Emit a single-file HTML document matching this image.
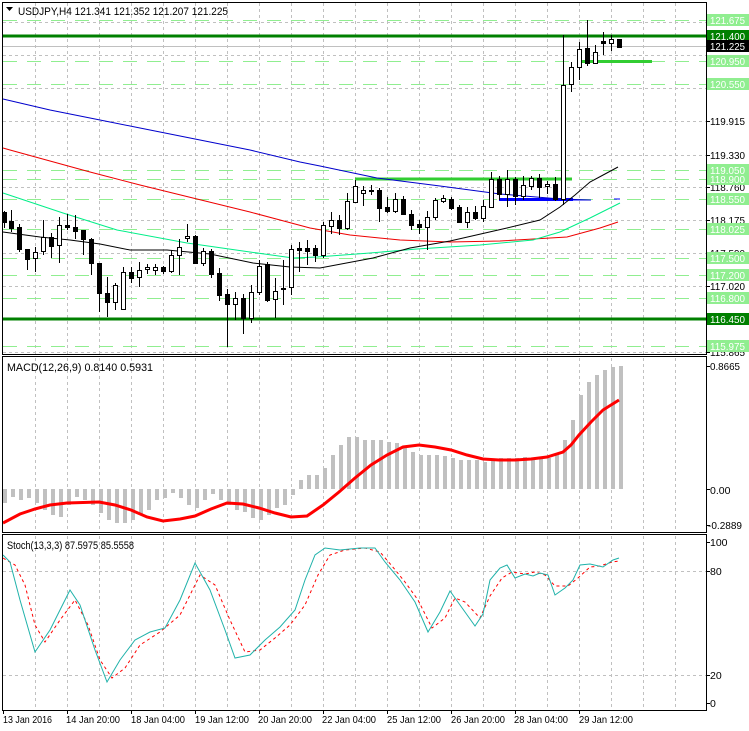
<!DOCTYPE html>
<html><head><meta charset="utf-8"><style>
html,body{margin:0;padding:0;background:#fff;width:749px;height:731px;overflow:hidden}
svg{display:block;font-family:"Liberation Sans",sans-serif;font-size:11px}
</style></head><body>
<svg width="749" height="731" viewBox="0 0 749 731" xmlns="http://www.w3.org/2000/svg">
<rect width="749" height="731" fill="#fff"/>
<g stroke="#c0c0c0" stroke-dasharray="3,3" shape-rendering="crispEdges">
<path d="M35.5 3V354M67.5 3V354M99.5 3V354M131.5 3V354M163.5 3V354M195.5 3V354M227.5 3V354M259.5 3V354M291.5 3V354M323.5 3V354M355.5 3V354M387.5 3V354M419.5 3V354M451.5 3V354M483.5 3V354M515.5 3V354M547.5 3V354M579.5 3V354M611.5 3V354M643.5 3V354M675.5 3V354"/>
<path d="M35.5 358V532M67.5 358V532M99.5 358V532M131.5 358V532M163.5 358V532M195.5 358V532M227.5 358V532M259.5 358V532M291.5 358V532M323.5 358V532M355.5 358V532M387.5 358V532M419.5 358V532M451.5 358V532M483.5 358V532M515.5 358V532M547.5 358V532M579.5 358V532M611.5 358V532M643.5 358V532M675.5 358V532"/>
<path d="M35.5 536V709M67.5 536V709M99.5 536V709M131.5 536V709M163.5 536V709M195.5 536V709M227.5 536V709M259.5 536V709M291.5 536V709M323.5 536V709M355.5 536V709M387.5 536V709M419.5 536V709M451.5 536V709M483.5 536V709M515.5 536V709M547.5 536V709M579.5 536V709M611.5 536V709M643.5 536V709M675.5 536V709"/>
<path d="M3 22.5H706M3 55.5H706M3 88.5H706M3 121.5H706M3 155.5H706M3 187.5H706M3 220.5H706M3 253.5H706M3 286.5H706M3 352.5H706"/>
<path d="M3 571.5H706M3 675.5H706"/>
</g>
<g stroke="#90ee90" stroke-dasharray="14,10" shape-rendering="crispEdges">
<path d="M3 20.5H706M3 61.5H706M3 84.5H706M3 170.5H706M3 179.5H706M3 199.5H706M3 229.5H706M3 258.5H706M3 275.5H706M3 298.5H706M3 346.5H706"/>
</g>
<path d="M3 46.5H706" stroke="#c0c0c0" shape-rendering="crispEdges"/>
<path d="M3 36H706M3 319H706" stroke="#008000" stroke-width="3" shape-rendering="crispEdges"/>
<path d="M355 179H572M582 61.5H652" stroke="#32cd32" stroke-width="3" shape-rendering="crispEdges"/>
<path d="M499 199.5H573" stroke="#0000ff" stroke-width="3" shape-rendering="crispEdges"/>
<path d="M573 200H591M614 199H620" stroke="#0000ff" stroke-width="1"/>
<polyline fill="none" stroke="#0000cc" stroke-width="1" points="3,99 50,110 100,120 150,130 200,140 250,150 300,162 320,166 377,178 440,186 500,194 560,199 590,200"/>
<polyline fill="none" stroke="#ee0000" stroke-width="1" points="3,148 10,150 50,161 90,172 140,185 197,199 250,212 310,228 350,235 400,240 450,242 500,241 567,237 600,228 618,222"/>
<polyline fill="none" stroke="#00ee88" stroke-width="1" points="3,193 30,202 63,213 117,230 187,243 250,252 293,258 317,257 370,253 417,249 480,245 533,240 560,232 590,218 620,203"/>
<polyline fill="none" stroke="#000" stroke-width="1" points="3,232 40,237 70,240 100,244 130,250 167,250 210,254 253,263 290,267 320,268 373,258 410,248 450,241 507,228 540,220 560,207 575,195 590,182 605,174 618,167"/>
<g stroke="#000" shape-rendering="crispEdges">
<path d="M4.5 211V228M11.5 210V232M19.5 224V252M27.5 249V270M35.5 247V272M43.5 220V255M51.5 233V258M59.5 217V263M67.5 214V230M75.5 215V239M83.5 230V255M91.5 238V275M99.5 263V312M107.5 277V317M115.5 283V310M123.5 267V310M131.5 267V283M139.5 262V287M147.5 264V274M155.5 264V275M163.5 266V274M171.5 250V273M179.5 239V275M187.5 224V242M195.5 235V263M203.5 248V266M211.5 249V278M219.5 268V301M227.5 289V347M235.5 292V320M243.5 294V334M251.5 285V323M259.5 260V295M267.5 262V302M275.5 278V318M283.5 260V305M291.5 245V295M299.5 242V272M307.5 240V265M315.5 245V262M323.5 222V258M331.5 212V234M339.5 215V235M347.5 193V230M355.5 180V203M363.5 186V206M371.5 185V195M379.5 188V222M387.5 197V213M395.5 193V213M403.5 196V215M411.5 210V230M419.5 220V234M427.5 211V250M435.5 198V220M443.5 195V203M451.5 197V210M459.5 205V223M467.5 207V228M475.5 206V220M483.5 200V222M491.5 172V208M499.5 176V200M507.5 170V207M515.5 177V205M523.5 176V200M531.5 176V190M539.5 174V198M547.5 181V194M555.5 177V201M563.5 35V205M571.5 62V92M579.5 42V80M587.5 20V66M595.5 45V64M603.5 32V55M611.5 35V51M619.5 39V48"/>
<g fill="#000">
<rect x="2.5" y="212.5" width="4" height="10"/><rect x="9.5" y="221.5" width="4" height="7"/><rect x="17.5" y="227.5" width="4" height="22"/><rect x="25.5" y="249.5" width="4" height="10"/><rect x="49.5" y="237.5" width="4" height="9"/><rect x="65.5" y="225.5" width="4" height="2"/><rect x="73.5" y="227.5" width="4" height="4"/><rect x="81.5" y="230.5" width="4" height="9"/><rect x="89.5" y="239.5" width="4" height="24"/><rect x="97.5" y="263.5" width="4" height="30"/><rect x="105.5" y="293.5" width="4" height="9"/><rect x="129.5" y="272.5" width="4" height="6"/><rect x="161.5" y="267.5" width="4" height="4"/><rect x="193.5" y="236.5" width="4" height="27"/><rect x="209.5" y="251.5" width="4" height="23"/><rect x="217.5" y="273.5" width="4" height="22"/><rect x="225.5" y="294.5" width="4" height="10"/><rect x="241.5" y="298.5" width="4" height="20"/><rect x="265.5" y="264.5" width="4" height="36"/><rect x="297.5" y="248.5" width="4" height="2"/><rect x="305.5" y="248.5" width="4" height="3"/><rect x="313.5" y="248.5" width="4" height="7"/><rect x="337.5" y="220.5" width="4" height="8"/><rect x="377.5" y="190.5" width="4" height="18"/><rect x="385.5" y="207.5" width="4" height="4"/><rect x="401.5" y="199.5" width="4" height="15"/><rect x="409.5" y="214.5" width="4" height="11"/><rect x="417.5" y="224.5" width="4" height="3"/><rect x="449.5" y="199.5" width="4" height="9"/><rect x="457.5" y="207.5" width="4" height="15"/><rect x="473.5" y="212.5" width="4" height="6"/><rect x="497.5" y="179.5" width="4" height="15"/><rect x="513.5" y="179.5" width="4" height="17"/><rect x="537.5" y="178.5" width="4" height="9"/><rect x="553.5" y="184.5" width="4" height="15"/><rect x="585.5" y="48.5" width="4" height="15"/><rect x="601.5" y="41.5" width="4" height="2"/><rect x="617.5" y="39.5" width="4" height="8"/>
</g>
<g fill="#fff">
<rect x="33.5" y="252.5" width="4" height="6"/><rect x="41.5" y="237.5" width="4" height="14"/><rect x="57.5" y="225.5" width="4" height="20"/><rect x="113.5" y="285.5" width="4" height="17"/><rect x="121.5" y="272.5" width="4" height="37"/><rect x="137.5" y="270.5" width="4" height="7"/><rect x="145.5" y="267.5" width="4" height="2"/><rect x="153.5" y="267.5" width="4" height="3"/><rect x="169.5" y="255.5" width="4" height="16"/><rect x="177.5" y="247.5" width="4" height="8"/><rect x="185.5" y="236.5" width="4" height="2"/><rect x="201.5" y="251.5" width="4" height="12"/><rect x="233.5" y="298.5" width="4" height="6"/><rect x="249.5" y="292.5" width="4" height="26"/><rect x="257.5" y="266.5" width="4" height="26"/><rect x="273.5" y="291.5" width="4" height="8"/><rect x="281.5" y="288.5" width="4" height="1"/><rect x="289.5" y="249.5" width="4" height="38"/><rect x="321.5" y="225.5" width="4" height="30"/><rect x="329.5" y="220.5" width="4" height="6"/><rect x="345.5" y="201.5" width="4" height="27"/><rect x="353.5" y="186.5" width="4" height="16"/><rect x="361.5" y="190.5" width="4" height="3"/><rect x="369.5" y="190.5" width="4" height="1"/><rect x="393.5" y="199.5" width="4" height="12"/><rect x="425.5" y="217.5" width="4" height="10"/><rect x="433.5" y="200.5" width="4" height="17"/><rect x="441.5" y="198.5" width="4" height="3"/><rect x="465.5" y="212.5" width="4" height="10"/><rect x="481.5" y="206.5" width="4" height="12"/><rect x="489.5" y="179.5" width="4" height="28"/><rect x="505.5" y="179.5" width="4" height="15"/><rect x="521.5" y="185.5" width="4" height="11"/><rect x="529.5" y="178.5" width="4" height="8"/><rect x="545.5" y="184.5" width="4" height="2"/><rect x="561.5" y="85.5" width="4" height="114"/><rect x="569.5" y="67.5" width="4" height="17"/><rect x="577.5" y="49.5" width="4" height="18"/><rect x="593.5" y="52.5" width="4" height="11"/><rect x="609.5" y="39.5" width="4" height="4"/>
</g>
</g>
<g stroke="#c0c0c0" stroke-width="4" shape-rendering="crispEdges">
<path d="M5 489V503M13 489V497M21 489V500M29 489V498M37 489V503M45 489V510M53 489V515M61 489V517M69 489V505M77 489V497M85 489V500M93 489V505M101 489V513M109 489V520M117 489V523M125 489V523M133 489V520M141 489V515M149 489V510M157 489V500M165 489V498M173 489V493M181 489V498M189 489V505M197 489V508M205 489V500M213 489V494M221 489V500M229 489V505M237 489V510M245 489V512M253 489V518M261 489V520M269 489V515M277 489V508M285 489V505M293 489V495M301 489V480M309 489V475M317 489V475M325 489V468M333 489V455M341 489V445M349 489V437M357 489V437M365 489V440M373 489V440M381 489V440M389 489V442M397 489V443M405 489V447M413 489V452M421 489V455M429 489V455M437 489V455M445 489V456M453 489V458M461 489V460M469 489V460M477 489V460M485 489V462M493 489V460M501 489V458M509 489V458M517 489V458M525 489V457M533 489V458M541 489V458M549 489V458M557 489V455M565 489V440M573 489V420M581 489V395M589 489V382M597 489V375M605 489V370M613 489V367M621 489V366"/>
</g>
<polyline fill="none" stroke="#ff0000" stroke-width="3" points="3,523 20,514 35,509 50,505 67,503 99,502 115,505 131,510 147,517 163,521 180,519 195,516 211,509 227,503 243,504 259,508 275,513 291,517 307,516 323,505 339,492 355,478 371,465 387,455 403,447 419,445 435,447 451,450 467,455 483,459 499,460 515,460 531,459 547,457 563,452 571,445 579,435 591,422 603,410 619,400"/>
<polyline fill="none" stroke="#ff0000" stroke-width="1" stroke-dasharray="3,3" points="3,558 15,565 25,585 35,625 45,642 60,620 75,600 88,625 100,660 112,678 125,668 140,645 160,632 180,615 200,575 215,585 230,620 245,652 260,650 275,638 290,625 305,605 318,575 330,555 345,550 365,548 380,552 392,566 405,582 418,600 432,628 445,618 455,598 465,602 480,618 490,596 502,578 512,572 525,574 535,572 545,575 555,586 568,586 578,578 590,567 600,566 612,562 620,561"/>
<polyline fill="none" stroke="#20b2aa" stroke-width="1" points="3,555 10,562 20,600 35,652 50,630 70,590 80,605 95,650 107,682 120,660 135,640 150,632 165,628 180,600 195,563 210,590 225,630 235,658 250,655 265,640 280,627 295,610 305,580 315,555 325,548 340,550 360,548 375,548 385,562 400,580 415,602 428,632 440,612 450,591 465,612 475,626 483,614 490,580 500,568 507,565 515,578 525,574 533,576 540,573 548,575 555,595 565,588 573,580 580,565 590,564 603,567 613,560 619,558"/>
<g fill="none" stroke="#000" shape-rendering="crispEdges">
<rect x="2.5" y="2.5" width="704" height="352"/>
<rect x="2.5" y="356.5" width="704" height="176"/>
<rect x="2.5" y="534.5" width="704" height="176"/>
<path d="M706 20.5h4M706 121.5h4M706 155.5h4M706 187.5h4M706 220.5h4M706 253.5h4M706 286.5h4M706 352.5h4M706 366.5h4M706 489.5h4M706 525.5h4M706 542.5h4M706 571.5h4M706 675.5h4M706 703.5h4"/>
<path d="M3.5 710v4M67.5 710v4M131.5 710v4M195.5 710v4M259.5 710v4M323.5 710v4M387.5 710v4M451.5 710v4M515.5 710v4M579.5 710v4"/>
</g>
<path d="M6 7h7l-3.5 4z" fill="#000"/>
<text x="18" y="15" fill="#000" textLength="210" lengthAdjust="spacingAndGlyphs">USDJPY,H4  121.341 121.352 121.207 121.225</text>
<text x="7" y="371" fill="#000" textLength="146" lengthAdjust="spacingAndGlyphs">MACD(12,26,9) 0.8140 0.5931</text>
<text x="7" y="549" fill="#000" textLength="127" lengthAdjust="spacingAndGlyphs">Stoch(13,3,3) 87.5975 85.5558</text>
<g fill="#000" font-size="10.5">
<text x="710" y="125" textLength="35" lengthAdjust="spacingAndGlyphs">119.915</text><text x="710" y="159" textLength="35" lengthAdjust="spacingAndGlyphs">119.330</text><text x="710" y="191" textLength="35" lengthAdjust="spacingAndGlyphs">118.760</text><text x="710" y="224" textLength="35" lengthAdjust="spacingAndGlyphs">118.175</text><text x="710" y="257" textLength="35" lengthAdjust="spacingAndGlyphs">117.590</text><text x="710" y="290" textLength="35" lengthAdjust="spacingAndGlyphs">117.020</text><text x="710" y="356" textLength="35" lengthAdjust="spacingAndGlyphs">115.865</text>
<text x="710" y="370" textLength="30" lengthAdjust="spacingAndGlyphs">0.8665</text><text x="710" y="494">0.00</text><text x="708" y="529" textLength="34" lengthAdjust="spacingAndGlyphs">-0.2889</text>
<text x="710" y="546">100</text><text x="710" y="575">80</text><text x="710" y="679">20</text><text x="710" y="707">0</text>
</g>
<g fill="#90ee90">
<rect x="707" y="14" width="42" height="12"/><rect x="707" y="55" width="42" height="12"/><rect x="707" y="78" width="42" height="12"/><rect x="707" y="164" width="42" height="12"/><rect x="707" y="173" width="42" height="12"/><rect x="707" y="193" width="42" height="12"/><rect x="707" y="223" width="42" height="12"/><rect x="707" y="252" width="42" height="12"/><rect x="707" y="269" width="42" height="12"/><rect x="707" y="292" width="42" height="12"/><rect x="707" y="340" width="42" height="12"/>
</g>
<rect x="707" y="30" width="42" height="12" fill="#008000"/>
<rect x="707" y="313" width="42" height="12" fill="#008000"/>
<rect x="707" y="40" width="42" height="12" fill="#000"/>
<g fill="#fff" font-size="10.5">
<text x="710" y="24" textLength="35" lengthAdjust="spacingAndGlyphs">121.675</text><text x="710" y="40" textLength="35" lengthAdjust="spacingAndGlyphs">121.400</text><text x="710" y="50" textLength="35" lengthAdjust="spacingAndGlyphs">121.225</text><text x="710" y="65" textLength="35" lengthAdjust="spacingAndGlyphs">120.950</text><text x="710" y="88" textLength="35" lengthAdjust="spacingAndGlyphs">120.550</text><text x="710" y="174" textLength="35" lengthAdjust="spacingAndGlyphs">119.050</text><text x="710" y="183" textLength="35" lengthAdjust="spacingAndGlyphs">118.900</text><text x="710" y="203" textLength="35" lengthAdjust="spacingAndGlyphs">118.550</text><text x="710" y="233" textLength="35" lengthAdjust="spacingAndGlyphs">118.025</text><text x="710" y="262" textLength="35" lengthAdjust="spacingAndGlyphs">117.500</text><text x="710" y="279" textLength="35" lengthAdjust="spacingAndGlyphs">117.200</text><text x="710" y="302" textLength="35" lengthAdjust="spacingAndGlyphs">116.800</text><text x="710" y="323" textLength="35" lengthAdjust="spacingAndGlyphs">116.450</text><text x="710" y="350" textLength="35" lengthAdjust="spacingAndGlyphs">115.975</text>
</g>
<g fill="#000" font-size="10.5">
<text x="3" y="723" textLength="49" lengthAdjust="spacingAndGlyphs">13 Jan 2016</text><text x="66" y="723" textLength="54" lengthAdjust="spacingAndGlyphs">14 Jan 20:00</text><text x="131" y="723" textLength="54" lengthAdjust="spacingAndGlyphs">18 Jan 04:00</text><text x="195" y="723" textLength="54" lengthAdjust="spacingAndGlyphs">19 Jan 12:00</text><text x="258" y="723" textLength="54" lengthAdjust="spacingAndGlyphs">20 Jan 20:00</text><text x="322" y="723" textLength="54" lengthAdjust="spacingAndGlyphs">22 Jan 04:00</text><text x="387" y="723" textLength="54" lengthAdjust="spacingAndGlyphs">25 Jan 12:00</text><text x="451" y="723" textLength="54" lengthAdjust="spacingAndGlyphs">26 Jan 20:00</text><text x="514" y="723" textLength="54" lengthAdjust="spacingAndGlyphs">28 Jan 04:00</text><text x="579" y="723" textLength="54" lengthAdjust="spacingAndGlyphs">29 Jan 12:00</text>
</g>
</svg>
</body></html>
